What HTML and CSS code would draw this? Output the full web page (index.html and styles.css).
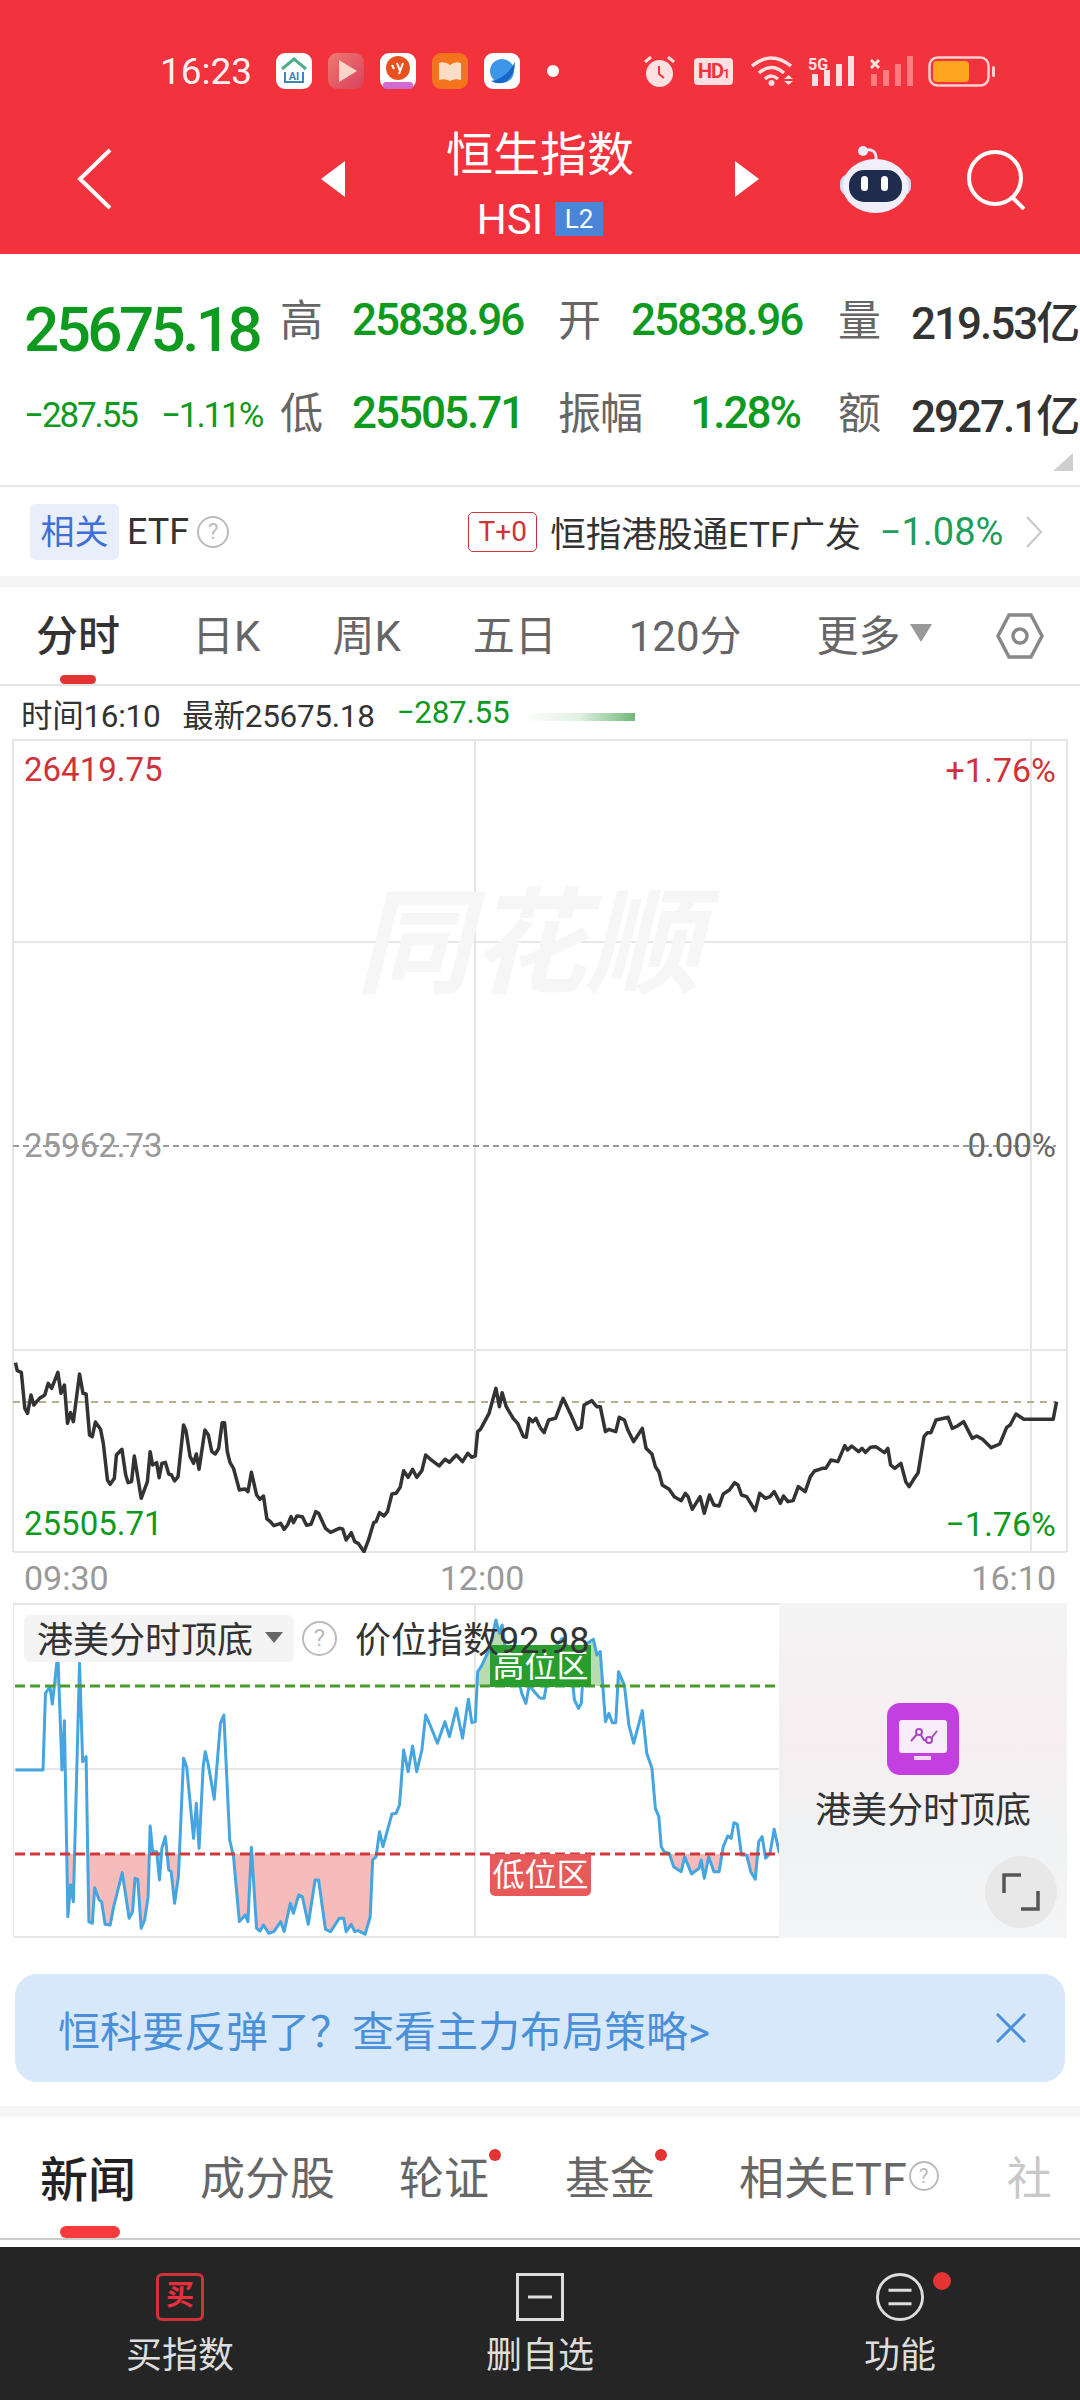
FILE: index.html
```html
<!DOCTYPE html>
<html lang="zh-CN">
<head>
    <meta charset="UTF-8">
    <title>恒生指数</title>
    <link rel="stylesheet" href="styles.css">
</head>
<body>
    <div class="page">
        <header class="top">
            <div class="status">
                <span class="clock">16:23</span>
                <div class="apps">
                    <svg class="app" viewBox="0 0 36 36"><rect width="36" height="36" rx="9" fill="#fff"/><path d="M6 16 18 6l12 10" fill="none" stroke="#4fae8a" stroke-width="3"/><path d="M9 19v10h18V19" fill="none" stroke="#3d86b8" stroke-width="2"/><text x="18" y="27" class="app-ai">AI</text></svg>
                    <svg class="app" viewBox="0 0 36 36"><defs><linearGradient id="playBg" x1="0" y1="0" x2="1" y2="1"><stop offset="0" stop-color="#f07a70"/><stop offset="1" stop-color="#d8405e"/></linearGradient></defs><rect width="36" height="36" rx="9" fill="url(#playBg)"/><path d="M11 7 29 18 11 29z" fill="#fbd5c8"/></svg>
                    <svg class="app" viewBox="0 0 36 36"><rect width="36" height="36" rx="9" fill="#fff"/><circle cx="18" cy="15" r="12" fill="#e8501f"/><path d="M12 12l2 4M17 10l3 8M23 10l-4 11" stroke="#fff" stroke-width="2"/><rect x="3" y="29" width="30" height="7" rx="3" fill="#d06ad0"/></svg>
                    <svg class="app" viewBox="0 0 36 36"><rect width="36" height="36" rx="9" fill="#f4741e"/><path d="M7 10q6-2 11 2 5-4 11-2v17q-6-2-11 1-5-3-11-1z" fill="#fbdcc4"/></svg>
                    <svg class="app" viewBox="0 0 36 36"><rect width="36" height="36" rx="9" fill="#fff"/><circle cx="18" cy="18" r="12" fill="#3f95e8"/><path d="M7 28Q22 26 31 9q0 14-10 20-7 3-14-1z" fill="#1668c8"/></svg>
                </div>
                <span class="status-dot"></span>
                <div class="sys">
                    <svg class="ic-alarm" viewBox="0 0 33 33"><circle cx="16.500" cy="18.500" r="13.500" fill="#ffe0e0"/><path d="M16 11v8l5 4" fill="none" stroke="#f2323c" stroke-width="2"/><path d="M2 7l6-5M31 7l-6-5" stroke="#ffe0e0" stroke-width="3"/></svg>
                    <span class="hd">HD<small>1</small></span>
                    <svg class="ic-wifi" viewBox="0 0 46 30"><g fill="none" stroke="#ffe0e0" stroke-width="3.500"><path d="M1 10Q20-6 40 10"/><path d="M8 17Q20 6 33 17"/><path d="M14 23Q20 17 27 23"/></g><circle cx="20.500" cy="27" r="3" fill="#ffe0e0"/><path d="M33 23h9l-4.500-4zM33 25h9l-4.500 4z" fill="#ffe0e0"/></svg>
                    <svg class="ic-5g" viewBox="0 0 48 30"><text x="0" y="14" class="net">5G</text><rect x="4" y="18" width="6" height="12" fill="#ffe0e0"/><rect x="16" y="14" width="6" height="16" fill="#ffe0e0"/><rect x="28" y="8" width="6" height="22" fill="#ffe0e0"/><rect x="40" y="0" width="6" height="30" fill="#ffe0e0"/></svg>
                    <svg class="ic-sig" viewBox="0 0 44 30"><path d="M1 4l8 8M9 4l-8 8" stroke="#ffe0e0" stroke-width="3"/><g fill="#ff7d80"><rect x="1" y="18" width="6" height="12"/><rect x="13" y="14" width="6" height="16"/><rect x="25" y="8" width="6" height="22"/><rect x="37" y="0" width="6" height="30"/></g></svg>
                    <svg class="ic-batt" viewBox="0 0 67 31"><rect x="1.500" y="1.500" width="59" height="28" rx="8" fill="none" stroke="#ffd0d0" stroke-width="2.500"/><rect x="5" y="5" width="36" height="21" rx="4" fill="#ffa51e"/><rect x="64" y="10" width="3" height="11" rx="1.500" fill="#ffd0d0"/></svg>
                </div>
            </div>
            <div class="nav">
                <svg class="back" viewBox="0 0 35 62"><path d="M33 2 3 31l30 29" fill="none" stroke="#fff" stroke-width="4"/></svg>
                <span class="tri tri-left"></span>
                <div class="title">
                    <div class="name">恒生指数</div>
                    <div class="code">HSI <span class="l2">L2</span></div>
                </div>
                <span class="tri tri-right"></span>
                <svg class="robot" viewBox="0 0 75 68"><path d="M27 5q12-2 11 10" fill="none" stroke="#e8e4f8" stroke-width="3"/><circle cx="25" cy="6" r="5" fill="#f0ecff"/><rect x="2" y="29" width="71" height="22" rx="9" fill="#d6d4f0"/><ellipse cx="37.500" cy="41" rx="33" ry="27" fill="#f1effc"/><rect x="11" y="25" width="53" height="32" rx="15" fill="#202c4e"/><rect x="23" y="31" width="7" height="15" rx="3.500" fill="#fff"/><rect x="43" y="31" width="7" height="15" rx="3.500" fill="#fff"/></svg>
                <svg class="search" viewBox="0 0 60 60"><circle cx="28" cy="28" r="26" fill="none" stroke="#fff" stroke-width="4"/><path d="M46 48l11 11" stroke="#fff" stroke-width="4"/></svg>
            </div>
        </header>

        <section class="quote">
            <div class="last">
                <div class="last-price">25675.18</div>
                <div class="last-change"><span>−287.55</span><span>−1.11%</span></div>
            </div>
            <div class="stats">
                <span class="lbl">高</span><span class="val down">25838.96</span>
                <span class="lbl">开</span><span class="val down">25838.96</span>
                <span class="lbl">量</span><span class="val">219.53亿</span>
                <span class="lbl">低</span><span class="val down">25505.71</span>
                <span class="lbl">振幅</span><span class="val down right">1.28%</span>
                <span class="lbl">额</span><span class="val">2927.1亿</span>
            </div>
            <span class="corner"></span>
        </section>

        <section class="etf">
            <span class="etf-chip">相关</span>
            <span class="etf-word">ETF</span>
            <span class="help help-32">?</span>
            <span class="t0">T+0</span>
            <span class="etf-name">恒指港股通ETF广发</span>
            <span class="etf-pct">−1.08%</span>
            <svg class="etf-more" viewBox="0 0 18 32"><path d="M2 1l14 15L2 31" fill="none" stroke="#ccc" stroke-width="2.500"/></svg>
        </section>

        <div class="band"></div>

        <nav class="period">
            <span class="period-on">分时</span>
            <span>日K</span>
            <span>周K</span>
            <span>五日</span>
            <span>120分</span>
            <span class="period-more">更多<i></i></span>
            <svg class="hex" viewBox="0 0 48 46"><path d="M13 2h22l11 21-11 21H13L2 23z" fill="none" stroke="#888" stroke-width="3.500"/><circle cx="24" cy="23" r="7" fill="none" stroke="#888" stroke-width="3.500"/></svg>
        </nav>

        <div class="legend">
            <span>时间16:10</span>
            <span>最新25675.18</span>
            <span class="down">−287.55</span>
            <i class="legend-fade"></i>
        </div>

        <section class="chart">
            <svg class="chart-svg" viewBox="0 739 1080 814">
                <g class="grid">
                    <path d="M13 740H1067M13 942H1067M13 1350H1067M13 1552H1067M13 739V1552M1067 739V1552M475 739V1552M1031 739V1552"/>
                </g>
                <path class="dash-mid" d="M13 1146H1056"/>
                <path class="dash-tan" d="M13 1402H1056"/>
                <g transform="translate(0 1340) scale(.3444 .3333)">
                    <polyline class="price-line" points="45,68 50,92 62,97 72,205 80,220 90,165 98,195 115,175 130,165 140,130 150,145 168,97 177,160 187,135 196,250 205,218 213,245 231,102 241,160 250,162 260,285 268,290 277,246 292,268 300,310 312,420 320,433 332,415 338,345 354,328 365,405 372,428 382,425 390,348 410,475 428,425 436,335 443,375 455,368 462,413 470,370 480,367 490,402 498,405 507,423 517,410 533,255 540,272 552,350 562,370 570,342 578,388 595,270 605,285 615,335 625,342 635,325 645,248 652,248 660,335 668,368 678,385 695,450 705,448 712,447 720,455 730,397 745,465 755,478 765,468 775,537 785,545 795,557 815,550 825,568 835,555 845,530 852,548 862,528 878,530 890,556 903,553 917,515 925,520 945,565 960,577 985,565 995,567 1005,600 1020,578 1030,605 1040,610 1057,635 1070,600 1085,548 1092,545 1102,518 1115,528 1125,515 1138,462 1150,460 1162,442 1172,392 1185,412 1198,388 1210,412 1225,392 1236,345 1250,358 1275,378 1292,358 1305,367 1325,345 1343,365 1358,340 1370,352 1380,348 1387,275 1395,268 1420,220 1440,145 1450,200 1458,158 1470,200 1490,235 1503,250 1520,290 1528,292 1537,235 1547,245 1556,235 1568,262"/>
                </g>
                <g transform="translate(540 1340) scale(.3444 .3333)">
                    <polyline class="price-line" points="0,262 12,278 25,240 45,235 67,175 90,225 108,268 120,262 128,195 150,182 165,200 175,200 190,275 200,268 220,275 230,232 245,240 255,270 272,305 297,265 308,325 325,342 335,380 345,395 355,435 375,448 390,470 410,482 422,460 430,470 442,508 465,470 477,520 492,465 505,495 520,498 532,462 550,450 565,428 575,435 585,465 600,470 625,512 638,460 655,475 668,470 680,455 698,490 707,468 720,485 735,482 750,440 770,455 785,410 797,393 820,385 830,385 845,360 865,365 885,317 893,330 905,318 925,335 935,325 945,337 960,322 975,320 1000,338 1010,325 1018,375 1030,385 1048,370 1062,425 1072,440 1085,418 1098,398 1115,290 1125,278 1135,278 1150,240 1185,232 1197,265 1212,258 1230,245 1255,295 1268,288 1285,298 1310,323 1335,312 1355,262 1365,255 1382,222 1405,238 1490,238 1500,185"/>
                </g>
            </svg>
            <div class="mark">同花顺</div>
            <span class="tag up tag-tl">26419.75</span>
            <span class="tag up tag-tr">+1.76%</span>
            <span class="tag mid tag-ml">25962.73</span>
            <span class="tag mid-dark tag-mr">0.00%</span>
            <span class="tag down tag-bl">25505.71</span>
            <span class="tag down tag-br">−1.76%</span>
        </section>

        <div class="times">
            <span>09:30</span>
            <span class="time-noon">12:00</span>
            <span class="time-end">16:10</span>
        </div>

        <section class="sub">
            <div class="sub-plot">
                <svg class="sub-svg" viewBox="13 1603 767 335">
                    <defs>
                        <clipPath id="lowClip"><rect x="-100" y="792" width="3000" height="400"/></clipPath>
                        <clipPath id="highClip"><rect x="-100" y="0" width="3000" height="288"/></clipPath>
                        <polyline id="idxA" class="idx-shape" points="45,540 125,540 132,310 145,290 152,342 168,190 180,540 187,392 197,980 205,885 213,935 231,220 240,515 250,500 258,995 268,1000 275,893 288,930 295,935 305,1003 320,1005 330,950 355,848 375,985 385,965 392,865 400,868 410,1015 420,990 430,920 436,708 443,785 455,785 463,870 470,775 480,740 490,840 497,845 507,940 518,860 533,505 542,530 562,745 570,640 578,775 590,530 596,485 605,525 622,628 640,400 650,375 667,750 678,800 695,995 712,975 720,995 730,772 745,1015 755,1023 765,1005 780,1030 795,1025 815,995 825,1025 843,940 852,970 867,915 878,920 895,1003 915,870 925,870 945,1018 960,1025 985,985 998,985 1005,1025 1020,1003 1030,1025 1040,1022 1060,1033 1075,980 1082,810 1092,800 1102,725 1112,770 1138,672 1150,670 1160,645 1172,480 1185,545 1198,468 1210,545 1225,480 1236,375 1250,408 1270,460 1292,395 1305,440 1325,355 1343,445 1360,328 1370,398 1380,395 1387,245 1397,230 1420,180 1440,90 1450,130 1458,105 1470,200 1500,240 1515,310 1527,340 1537,285 1547,300 1568,325"/>
                        <polyline id="idxB" class="idx-shape" points="0,325 12,325 25,250 45,170 65,145 85,180 100,330 112,355 120,340 130,165 155,148 165,195 175,185 190,395 200,370 210,398 220,398 228,245 245,285 258,405 272,460 297,362 310,490 325,535 335,655 345,680 352,770 360,785 375,790 388,830 410,845 420,800 440,852 462,835 468,810 477,865 490,800 505,845 520,845 532,770 545,738 555,745 563,698 573,703 585,795 600,795 612,845 625,868 635,755 645,740 655,805 668,790 680,718 695,790"/>
                    </defs>
                    <path class="grid-line" d="M13 1604H780M13 1769H780M13 1937H780M13 1603V1938M475 1603V1938"/>
                    <g transform="translate(0 1590) scale(.3444 .3333)">
                        <use href="#idxA" class="fill-low" clip-path="url(#lowClip)"/>
                        <use href="#idxA" class="fill-high" clip-path="url(#highClip)"/>
                        <use href="#idxA" class="idx-line"/>
                    </g>
                    <g transform="translate(540 1590) scale(.3444 .3333)">
                        <use href="#idxB" class="fill-low" clip-path="url(#lowClip)"/>
                        <use href="#idxB" class="fill-high" clip-path="url(#highClip)"/>
                        <use href="#idxB" class="idx-line"/>
                    </g>
                    <path class="dash-green" d="M15 1686H776"/>
                    <path class="dash-red" d="M15 1854H776"/>
                </svg>
                <span class="zone zone-high">高位区</span>
                <span class="zone zone-low">低位区</span>
                <div class="sub-head">
                    <span class="sub-chip"><b>港美分时顶底</b><i></i></span>
                    <span class="help help-35">?</span>
                    <span class="sub-value">价位指数92.98</span>
                </div>
            </div>
            <div class="promo">
                <svg class="promo-icon" viewBox="0 0 72 72"><rect width="72" height="72" rx="13" fill="#c43fe0"/><rect x="12" y="17" width="48" height="33" rx="3" fill="#f8ecfb"/><rect x="27" y="53" width="17" height="4" fill="#f3d8f8"/><path d="M24 38l8-9 5 8 5 1 8-10" fill="none" stroke="#a948c4" stroke-width="2"/><circle cx="32" cy="29" r="3" fill="#f8ecfb" stroke="#a948c4" stroke-width="2"/><circle cx="42" cy="37" r="3" fill="#f8ecfb" stroke="#a948c4" stroke-width="2"/></svg>
                <span class="promo-text">港美分时顶底</span>
                <span class="expand">
                    <svg viewBox="0 0 38 38"><path d="M2 20V2h17M36 18v18H19" fill="none" stroke="#555" stroke-width="3.500"/></svg>
                </span>
            </div>
        </section>

        <aside class="banner">
            <span>恒科要反弹了？查看主力布局策略&gt;</span>
            <svg class="banner-x" viewBox="0 0 30 30"><path d="M1 1l28 28M29 1L1 29" stroke="#4a90d9" stroke-width="3"/></svg>
        </aside>

        <div class="band band-low"></div>

        <nav class="news-tabs">
            <span class="news-on">新闻</span>
            <span>成分股</span>
            <span class="has-dot">轮证</span>
            <span class="has-dot">基金</span>
            <span class="news-etf">相关ETF<b class="help help-30">?</b></span>
            <span class="news-cut">社</span>
        </nav>

        <footer class="bar">
            <div class="bar-item">
                <span class="buy-box">买</span>
                <span>买指数</span>
            </div>
            <div class="bar-item">
                <svg class="bar-icon" viewBox="0 0 48 48"><rect x="1.500" y="1.500" width="45" height="45" fill="none" stroke="#ddd" stroke-width="3"/><path d="M12 24h24" stroke="#ddd" stroke-width="3"/></svg>
                <span>删自选</span>
            </div>
            <div class="bar-item">
                <svg class="bar-icon" viewBox="0 0 50 50"><circle cx="25" cy="25" r="23.500" fill="none" stroke="#ddd" stroke-width="3"/><path d="M13 18h24M13 32h24" stroke="#ddd" stroke-width="3"/></svg>
                <span>功能</span>
                <i class="bar-dot"></i>
            </div>
        </footer>
    </div>
</body>
</html>
```

FILE: styles.css
```css
* {
    box-sizing: border-box;
}

body {
    margin: 0;
    background-color: #ffffff;
    font-family: Roboto, "Noto Sans CJK SC", sans-serif;
    color: #333333;
}

svg {
    display: block;
}

.page {
    width: 1080px;
    height: 2400px;
    overflow: hidden;
}

.down {
    color: #0e9a1e;
}

.up {
    color: #d0323a;
}

/* red header */
.top {
    height: 254px;
    background-color: #f2323c;
    color: #ffffff;
}

.status {
    display: flex;
    align-items: center;
    height: 142px;
    padding: 0 0 0 160px;
}

.clock {
    width: 116px;
    font-size: 37px;
    color: #fff0f0;
}

.apps {
    display: flex;
    gap: 16px;
}

.app {
    width: 36px;
    height: 36px;
}

.app-ai {
    font-size: 11px;
    font-weight: 700;
    text-anchor: middle;
    fill: #3d86b8;
}

.status-dot {
    width: 12px;
    height: 12px;
    margin-left: 27px;
    border-radius: 50%;
    background-color: #ffffff;
}

.sys {
    display: flex;
    align-items: center;
    margin-left: 84px;
}

.ic-alarm {
    width: 33px;
    height: 33px;
}

.hd {
    width: 39px;
    height: 27px;
    margin-left: 18px;
    border-radius: 4px;
    background-color: #ffe0e0;
    color: #f2323c;
    font-size: 20px;
    font-weight: 700;
    line-height: 27px;
    text-align: center;
    letter-spacing: -1px;
}

.hd small {
    font-size: 12px;
}

.ic-wifi {
    width: 46px;
    height: 30px;
    margin-left: 18px;
}

.ic-5g {
    width: 48px;
    height: 30px;
    margin-left: 11px;
}

.net {
    font-size: 16px;
    font-weight: 700;
    fill: #ffe0e0;
}

.ic-sig {
    width: 44px;
    height: 30px;
    margin-left: 14px;
}

.ic-batt {
    width: 67px;
    height: 31px;
    margin-left: 14px;
}

.nav {
    display: flex;
    align-items: center;
    height: 112px;
    padding-left: 77px;
}

.back {
    width: 35px;
    height: 62px;
    margin-top: -38px;
}

.tri {
    width: 0;
    height: 0;
    margin-top: -38px;
    border-top: 18px solid transparent;
    border-bottom: 18px solid transparent;
}

.tri-left {
    margin-left: 209px;
    border-right: 24px solid #ffffff;
}

.tri-right {
    border-left: 24px solid #ffffff;
}

.title {
    width: 390px;
    margin-top: -25px;
    text-align: center;
}

.name {
    height: 67px;
    font-size: 47px;
    line-height: 56px;
}

.code {
    display: flex;
    justify-content: center;
    align-items: center;
    gap: 12px;
    height: 50px;
    font-size: 42px;
}

.l2 {
    width: 48px;
    height: 34px;
    background-color: #4a86d8;
    font-size: 26px;
    line-height: 34px;
}

.robot {
    width: 75px;
    height: 68px;
    margin-left: 79px;
    margin-top: -38px;
}

.search {
    width: 60px;
    height: 60px;
    margin-left: 54px;
    margin-top: -36px;
}

/* quote block */
.quote {
    position: relative;
    display: flex;
    height: 233px;
    padding-left: 24px;
    border-bottom: 2px solid #e8e8e8;
}

.last {
    width: 257px;
}

.last-price {
    height: 116px;
    padding-top: 41px;
    color: #0e9a1e;
    font-size: 62px;
    font-weight: 500;
    line-height: 70px;
    letter-spacing: -3.600px;
}

.last-change {
    display: flex;
    gap: 24px;
    padding-top: 26px;
    color: #0e9a1e;
    font-size: 35px;
    line-height: 40px;
    letter-spacing: -2.100px;
}

.stats {
    display: grid;
    grid-template-columns: 72px 206px 73px 207px 73px auto;
    grid-auto-rows: 93px;
    padding-top: 19px;
    margin-left: -1px;
    align-items: center;
}

.lbl {
    margin-top: -6px;
    color: #666666;
    font-size: 43px;
    white-space: nowrap;
    letter-spacing: -1px;
}

.val {
    font-size: 44px;
    font-weight: 500;
    letter-spacing: -2px;
    white-space: nowrap;
}

.val.right {
    text-align: right;
    padding-right: 38px;
}

.corner {
    position: absolute;
    right: 7px;
    bottom: 14px;
    width: 0;
    height: 0;
    border-left: 20px solid transparent;
    border-bottom: 18px solid #cfcfcf;
}

/* etf row */
.etf {
    display: flex;
    align-items: center;
    height: 89px;
    padding-left: 30px;
}

.etf-chip {
    width: 89px;
    height: 56px;
    border-radius: 5px;
    background-color: #e8effb;
    color: #3f6fd8;
    font-size: 34px;
    line-height: 56px;
    text-align: center;
}

.etf-word {
    margin-left: 8px;
    font-size: 36px;
}

.help {
    display: block;
    border: 2px solid #bbbbbb;
    border-radius: 50%;
    color: #bbbbbb;
    font-weight: 400;
    text-align: center;
}

.help-32 {
    width: 32px;
    height: 32px;
    margin-left: 8px;
    font-size: 22px;
    line-height: 28px;
}

.t0 {
    width: 69px;
    height: 40px;
    margin-left: 239px;
    border: 1px solid #d0323a;
    border-radius: 5px;
    color: #d0323a;
    font-size: 28px;
    line-height: 38px;
    text-align: center;
}

.etf-name {
    margin-left: 13px;
    font-size: 35.600px;
    white-space: nowrap;
}

.etf-pct {
    margin-left: 19px;
    color: #1f9d5a;
    font-size: 38px;
}

.etf-more {
    width: 18px;
    height: 32px;
    margin-left: 22px;
}

.band {
    height: 11px;
    background-color: #f5f5f5;
}

/* period tabs */
.period {
    position: relative;
    display: flex;
    align-items: center;
    gap: 72px;
    height: 99px;
    padding: 0 0 6px 36px;
    border-bottom: 2px solid #e5e5e5;
    color: #666666;
    font-size: 42px;
}

.period-on {
    color: #333333;
    font-weight: 500;
}

.period-on::after {
    content: "";
    position: absolute;
    left: 60px;
    bottom: 0;
    width: 36px;
    height: 9px;
    border-radius: 5px;
    background-color: #e33333;
}

.period-more {
    display: flex;
    align-items: center;
    margin-left: 3px;
}

.period-more i {
    width: 0;
    height: 0;
    margin-left: 9px;
    border-left: 11px solid transparent;
    border-right: 11px solid transparent;
    border-top: 18px solid #999999;
}

.hex {
    position: absolute;
    left: 996px;
    top: 26px;
    width: 48px;
    height: 46px;
}

.legend {
    display: flex;
    align-items: center;
    gap: 22px;
    height: 53px;
    padding-left: 21px;
    font-size: 31.500px;
    letter-spacing: -.300px;
}

.legend-fade {
    width: 112px;
    height: 8px;
    margin: 8px 0 0 -8px;
    background: linear-gradient(to right, #ffffff, #e2f0e3 50%, #6fb878);
}

/* price chart */
.chart {
    position: relative;
    height: 814px;
}

.chart-svg {
    width: 1080px;
    height: 814px;
}

.grid path,
.grid-line {
    fill: none;
    stroke: #e6e6e6;
    stroke-width: 2;
}

.dash-mid {
    fill: none;
    stroke: #999999;
    stroke-width: 2;
    stroke-dasharray: 6 4;
}

.dash-tan {
    fill: none;
    stroke: #b8ae8c;
    stroke-width: 2;
    stroke-dasharray: 7 6;
}

.price-line {
    fill: none;
    stroke: #333333;
    stroke-width: 3.500;
    stroke-linejoin: round;
    vector-effect: non-scaling-stroke;
}

.mark {
    position: absolute;
    left: 356px;
    top: 146px;
    color: #f6f6f6;
    font-size: 115px;
    font-style: italic;
    font-weight: 700;
    line-height: 120px;
    white-space: nowrap;
}

.tag {
    position: absolute;
    font-size: 33px;
    line-height: 40px;
}

.mid {
    color: #999999;
}

.mid-dark {
    color: #666666;
}

.tag-tl { left: 24px; top: 11px; }
.tag-tr { right: 24px; top: 11px; font-size: 34px; }
.tag-ml { left: 24px; top: 387px; }
.tag-mr { right: 24px; top: 387px; }
.tag-bl { left: 24px; top: 765px; }
.tag-br { right: 24px; top: 765px; font-size: 34px; }

.times {
    display: flex;
    height: 50px;
    padding: 5px 24px 0 24px;
    color: #999999;
    font-size: 34px;
    line-height: 40px;
}

.time-noon {
    margin-left: 331px;
}

.time-end {
    margin-left: auto;
}

/* indicator panel */
.sub {
    display: flex;
    height: 335px;
    margin-left: 13px;
    width: 1054px;
}

.sub-plot {
    position: relative;
    width: 766px;
}

.sub-svg {
    width: 767px;
    height: 335px;
}

.idx-shape {
    vector-effect: non-scaling-stroke;
}

.fill-low {
    fill: #f6bcbc;
    stroke: none;
}

.fill-high {
    fill: #b8dcb0;
    stroke: none;
}

.idx-line {
    fill: none;
    stroke: #45a5e0;
    stroke-width: 3;
    stroke-linejoin: round;
}

.dash-green {
    fill: none;
    stroke: #4a9a2a;
    stroke-width: 3;
    stroke-dasharray: 10 5;
}

.dash-red {
    fill: none;
    stroke: #d0383c;
    stroke-width: 3;
    stroke-dasharray: 10 5;
}

.zone {
    position: absolute;
    left: 477px;
    width: 101px;
    height: 42px;
    color: #ffffff;
    font-size: 32px;
    line-height: 42px;
    text-align: center;
}

.zone-high {
    top: 42px;
    background-color: #2a9d2f;
}

.zone-low {
    top: 251px;
    border-radius: 0 0 5px 5px;
    background-color: #e85a5a;
}

.sub-head {
    position: absolute;
    left: 11px;
    top: 11px;
    display: flex;
    align-items: center;
}

.sub-chip {
    display: flex;
    align-items: center;
    width: 270px;
    height: 47px;
    padding: 0 0 3px 13px;
    border-radius: 6px;
    background-color: #f4f4f4;
    font-size: 36px;
    white-space: nowrap;
}

.sub-chip b {
    font-weight: 400;
}

.sub-chip i {
    width: 0;
    height: 0;
    margin-left: 12px;
    border-left: 9px solid transparent;
    border-right: 9px solid transparent;
    border-top: 11px solid #666666;
}

.help-35 {
    width: 35px;
    height: 35px;
    margin-left: 8px;
    font-size: 24px;
    line-height: 30px;
}

.sub-value {
    margin: -3px 0 0 18px;
    font-size: 36px;
    white-space: nowrap;
}

.promo {
    position: relative;
    display: flex;
    flex-direction: column;
    align-items: center;
    justify-content: center;
    gap: 6px;
    width: 288px;
    background: linear-gradient(to bottom, #f4f4f5, #f6eef0 40%, #eff2f3 70%, #f4f5f6);
}

.promo-icon {
    width: 72px;
    height: 72px;
}

.promo-text {
    margin-bottom: 6px;
    color: #333333;
    font-size: 36px;
    white-space: nowrap;
}

.expand {
    position: absolute;
    right: 10px;
    bottom: 10px;
    display: flex;
    align-items: center;
    justify-content: center;
    width: 72px;
    height: 72px;
    border-radius: 50%;
    background-color: #e8e8e8;
}

.expand svg {
    width: 38px;
    height: 38px;
}

/* banner */
.banner {
    display: flex;
    align-items: center;
    justify-content: space-between;
    height: 108px;
    margin: 36px 15px 24px;
    padding: 0 39px 0 43px;
    border-radius: 22px;
    background-color: #d8e8fb;
    color: #4a90d9;
    font-size: 42px;
}

.banner-x {
    width: 30px;
    height: 30px;
}

/* news tabs */
.news-tabs {
    position: relative;
    display: flex;
    align-items: center;
    gap: 64px;
    height: 123px;
    padding: 0 0 4px 40px;
    border-bottom: 2px solid #cccccc;
    color: #666666;
    font-size: 45px;
    white-space: nowrap;
}

.news-on {
    color: #222222;
    font-size: 48px;
    font-weight: 500;
}

.news-on::after {
    content: "";
    position: absolute;
    left: 60px;
    bottom: 0;
    width: 60px;
    height: 12px;
    border-radius: 6px;
    background-color: #f43a3a;
}

.has-dot {
    position: relative;
    margin-right: 12px;
}

.has-dot::after {
    content: "";
    position: absolute;
    right: -12px;
    top: 6px;
    width: 12px;
    height: 12px;
    border-radius: 50%;
    background-color: #e33333;
}

.news-tabs span {
    display: flex;
    align-items: center;
}

.news-etf {
    margin-left: 8px;
}

.help-30 {
    width: 30px;
    height: 30px;
    margin-left: 2px;
    font-size: 20px;
    line-height: 26px;
}

.news-cut {
    margin-left: 4px;
    color: #c8c8c8;
}

/* bottom bar */
.bar {
    display: flex;
    height: 153px;
    margin-top: 7px;
    background-color: #252525;
    color: #dddddd;
    font-size: 36px;
}

.bar-item {
    position: relative;
    display: flex;
    flex-direction: column;
    align-items: center;
    justify-content: flex-start;
    gap: 5px;
    width: 360px;
    padding-top: 26px;
}

.bar-icon {
    width: 48px;
    height: 48px;
}

.buy-box {
    width: 48px;
    height: 48px;
    border: 3px solid #d0323a;
    border-radius: 6px;
    color: #e8303c;
    font-size: 28px;
    font-weight: 700;
    line-height: 40px;
    text-align: center;
}

.bar-dot {
    position: absolute;
    left: 213px;
    top: 25px;
    width: 18px;
    height: 18px;
    border-radius: 50%;
    background-color: #e33333;
}
```
